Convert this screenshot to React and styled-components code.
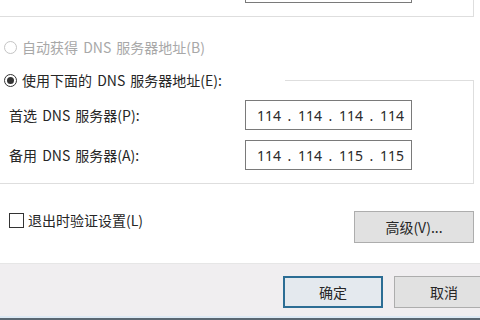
import React from "react";
import styled, { createGlobalStyle } from "styled-components";

const GlobalStyle = createGlobalStyle`
  html, body {
    margin: 0;
    padding: 0;
    background: #ffffff;
  }
  body {
    font-family: "Noto Sans CJK SC", "Noto Sans", sans-serif;
    font-size: 14px;
    word-spacing: 2px;
    color: #262626;
  }
`;

const Page = styled.div`
  width: 480px;
  height: 320px;
  overflow: hidden;
  display: flex;
  flex-direction: column;
  background: #ffffff;
`;

const Main = styled.div`
  width: 474px;
  display: flex;
  flex-direction: column;
`;

const TopGroup = styled.div`
  box-sizing: border-box;
  height: 17px;
  border-right: 1px solid #dedede;
  border-bottom: 1px solid #dedede;
`;

const TopStub = styled.div`
  margin-left: 245px;
  width: 167px;
  height: 3px;
  box-sizing: border-box;
  border: 1px solid #7a7a7a;
  border-top: none;
`;

const OptionRow = styled.label`
  display: flex;
  align-items: center;
  height: 18px;
  margin-top: ${({ top }) => top}px;
  padding-left: 4px;
  gap: 5px;
  color: ${({ disabled }) => (disabled ? "#a8a8a8" : "#262626")};
  white-space: nowrap;
`;

const Radio = styled.span`
  box-sizing: border-box;
  width: 13px;
  height: 13px;
  border-radius: 50%;
  border: 1px solid ${({ disabled }) => (disabled ? "#c4c4c4" : "#333333")};
  display: flex;
  align-items: center;
  justify-content: center;
  flex: none;
  &::after {
    content: "";
    width: 7px;
    height: 7px;
    border-radius: 50%;
    background: #333333;
    display: ${({ checked }) => (checked ? "block" : "none")};
  }
`;

const GroupHead = styled.div`
  display: flex;
  height: 18px;
  margin-top: 15px;
`;

const HeadRule = styled.div`
  flex: 1;
  margin-left: 63px;
  margin-top: 9px;
  border-top: 1px solid #dedede;
  border-right: 1px solid #dedede;
`;

const GroupBody = styled.div`
  display: flex;
  flex-direction: column;
  gap: 10px;
  padding: 11px 0 13px 9px;
  border-right: 1px solid #dedede;
  border-bottom: 1px solid #dedede;
`;

const FieldRow = styled.div`
  display: grid;
  grid-template-columns: 236px 167px;
  align-items: center;
`;

const FieldLabel = styled.span`
  white-space: nowrap;
`;

const IpBox = styled.div`
  box-sizing: border-box;
  height: 30px;
  border: 1px solid #7a7a7a;
  display: flex;
  align-items: center;
  padding-left: 11px;
  font-family: "Noto Sans", "Open Sans", sans-serif;
  font-size: 14px;
  word-spacing: 0;
  color: #2a2a2a;
`;

const Octet = styled.span`
  width: 24px;
  text-align: center;
`;

const Dot = styled.span`
  width: 17px;
  text-align: center;
`;

const OptionsBar = styled.div`
  display: flex;
  justify-content: space-between;
  align-items: flex-start;
  margin-top: 27px;
`;

const CheckRow = styled.label`
  display: flex;
  align-items: center;
  height: 18px;
  padding-left: 9px;
  gap: 4px;
  white-space: nowrap;
`;

const CheckBox = styled.span`
  box-sizing: border-box;
  width: 15px;
  height: 15px;
  border: 1px solid #333333;
  background: #ffffff;
  flex: none;
`;

const Button = styled.button`
  box-sizing: border-box;
  width: ${({ w }) => w}px;
  height: 32px;
  flex: none;
  margin: 0;
  padding: 0;
  font-family: "Noto Sans CJK SC", "Noto Sans", sans-serif;
  font-size: 14px;
  color: #262626;
  background: ${({ primary }) => (primary ? "#e4e9ee" : "#e1e1e1")};
  border: ${({ primary }) => (primary ? "2px solid #2c6d94" : "1px solid #adadad")};
`;

const Footer = styled.div`
  margin-top: 20px;
  flex: 1;
  display: flex;
  align-items: flex-start;
  gap: 11px;
  padding: 12px 0 0 283px;
  background: #f0eef0;
  border-top: 1px solid #e6e6e6;
  overflow: hidden;
`;

const BottomEdge = styled.div`
  height: 2px;
  border-top: 2px solid #dde9f4;
  background: #5a6772;
`;

const ipRows = [
  { label: "首选 DNS 服务器(P):", ip: ["114", "114", "114", "114"] },
  { label: "备用 DNS 服务器(A):", ip: ["114", "114", "115", "115"] },
];

function IpField({ parts }) {
  return (
    <IpBox>
      {parts.map((p, i) => (
        <React.Fragment key={i}>
          {i > 0 && <Dot>.</Dot>}
          <Octet>{p}</Octet>
        </React.Fragment>
      ))}
    </IpBox>
  );
}

export default function App() {
  return (
    <Page>
      <GlobalStyle />
      <Main>
        <TopGroup>
          <TopStub />
        </TopGroup>
        <OptionRow top={21} disabled>
          <Radio disabled />
          自动获得 DNS 服务器地址(B)
        </OptionRow>
        <GroupHead>
          <OptionRow top={0}>
            <Radio checked />
            使用下面的 DNS 服务器地址(E):
          </OptionRow>
          <HeadRule />
        </GroupHead>
        <GroupBody>
          {ipRows.map((row) => (
            <FieldRow key={row.label}>
              <FieldLabel>{row.label}</FieldLabel>
              <IpField parts={row.ip} />
            </FieldRow>
          ))}
        </GroupBody>
        <OptionsBar>
          <CheckRow>
            <CheckBox />
            退出时验证设置(L)
          </CheckRow>
          <Button w={120}>高级(V)...</Button>
        </OptionsBar>
      </Main>
      <Footer>
        <Button primary w={100}>确定</Button>
        <Button w={100}>取消</Button>
      </Footer>
      <BottomEdge />
    </Page>
  );
}
